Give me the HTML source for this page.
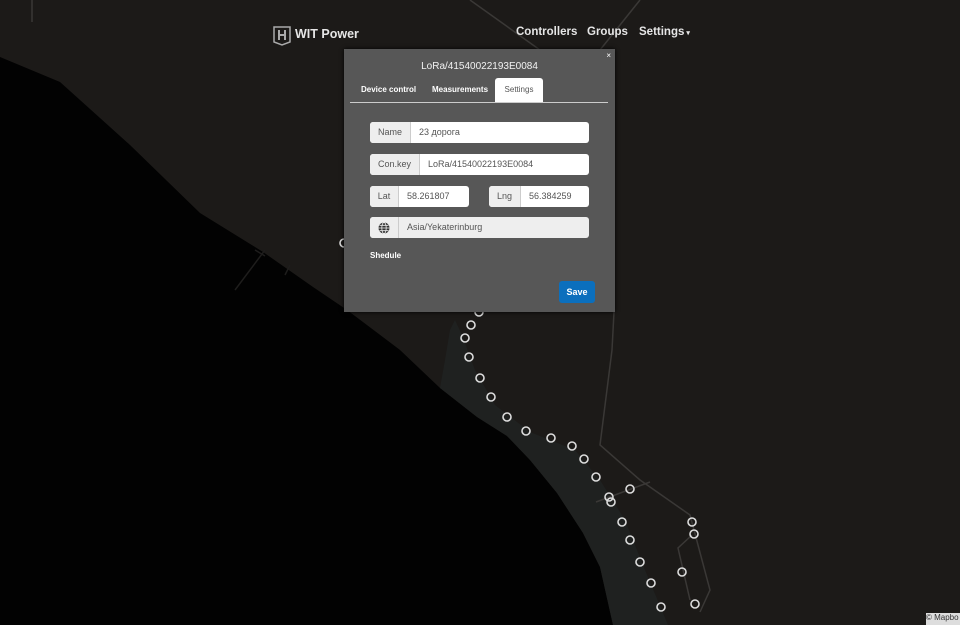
<!DOCTYPE html>
<html><head><meta charset="utf-8"><style>
body{margin:0;width:960px;height:625px;overflow:hidden;background:#1c1a18;font-family:"Liberation Sans",Arial,sans-serif;position:relative}
svg.map{position:absolute;left:0;top:0}
.nav{position:absolute;color:#e6e6e6;font-weight:bold;font-size:11.5px;top:26px}
.modal{position:absolute;left:344px;top:49px;width:271px;height:263px;background:#575757;box-shadow:0 0 4px #000}
.title{position:absolute;left:0;width:271px;top:12px;text-align:center;color:#f2f2f2;font-size:10px}
.tab{position:absolute;top:36px;font-size:8px;color:#fff;font-weight:bold}
.tabact{position:absolute;left:151px;top:29px;width:48px;height:24px;background:#fff;border-radius:3px 3px 0 0;color:#555;font-size:8px;text-align:center;line-height:24px}
.line{position:absolute;left:6px;top:53px;width:258px;height:1px;background:#ccc}
.grp{position:absolute;height:21px;border-radius:3px;background:#fff;font-size:9px;color:#555;overflow:hidden}
.grp .ad{position:absolute;left:0;top:0;height:21px;background:#eee;border-right:1px solid #ccc;text-align:center;line-height:21px;color:#555}
.grp .v{position:absolute;top:0;line-height:21px}
.save{position:absolute;left:215px;top:232px;width:36px;height:22px;background:#0b6fbd;border-radius:3px;color:#fff;font-size:9px;text-align:center;line-height:22px;font-weight:bold}
</style></head><body>
<svg class="map" width="960" height="625">
<polygon points="0,57 60,82 130,145 200,213 263,252 313,287 347,310 400,350 440,388 477,417 507,436 530,460 557,493 583,533 600,567 613,625 0,625" fill="#020202"/>
<polygon points="440,388 477,417 507,436 530,460 557,493 583,533 600,567 613,625 668,625 645,570 625,520 600,480 575,450 530,432 495,405 475,370 462,335 455,320 450,330 445,360" fill="#1f2120"/>
<g stroke="#1e1d1c" stroke-width="1.5" fill="none">
<path d="M235,290 L265,250 M255,250 L265,256 M285,275 L290,265"/>
</g>
<g stroke="#3a3836" stroke-width="1.5" fill="none">
<line x1="32" y1="0" x2="32" y2="22"/><line x1="470" y1="0" x2="540" y2="50"/><line x1="640" y1="0" x2="600" y2="50"/>
<path d="M614,312 L612,350 L600,445 L640,480 L690,515 L710,590 L700,612"/>
<path d="M596,502 L650,482"/><path d="M692,535 L678,548 L690,600"/>
</g>
<g stroke="#ddd" stroke-width="1.6" fill="none">
<circle cx="344" cy="243" r="4"/><circle cx="479" cy="312" r="4"/><circle cx="471" cy="325" r="4"/><circle cx="465" cy="338" r="4"/><circle cx="469" cy="357" r="4"/><circle cx="480" cy="378" r="4"/><circle cx="491" cy="397" r="4"/><circle cx="507" cy="417" r="4"/><circle cx="526" cy="431" r="4"/><circle cx="551" cy="438" r="4"/><circle cx="572" cy="446" r="4"/><circle cx="584" cy="459" r="4"/><circle cx="596" cy="477" r="4"/><circle cx="609" cy="497" r="4"/><circle cx="611" cy="502" r="4"/><circle cx="630" cy="489" r="4"/><circle cx="622" cy="522" r="4"/><circle cx="630" cy="540" r="4"/><circle cx="640" cy="562" r="4"/><circle cx="651" cy="583" r="4"/><circle cx="661" cy="607" r="4"/><circle cx="692" cy="522" r="4"/><circle cx="694" cy="534" r="4"/><circle cx="682" cy="572" r="4"/><circle cx="695" cy="604" r="4"/>
</g>
<path d="M274,27 h16 v15 l-8,3 l-8,-3z" fill="none" stroke="#aaa" stroke-width="1.5"/><path d="M279,30 v10 M285,30 v10 M279,35 h6" stroke="#aaa" stroke-width="2"/>
</svg>
<div class="nav" style="left:295px;top:27px;font-size:12.5px">WIT Power</div>
<div class="nav" style="left:516px">Controllers</div>
<div class="nav" style="left:587px">Groups</div>
<div class="nav" style="left:639px">Settings<span style="font-size:7px"> ▾</span></div>
<div style="position:absolute;right:0;bottom:0;width:34px;height:12px;background:#ddd;font-size:8px;color:#333">© Mapbo</div>
<div class="modal">
<div style="position:absolute;right:4px;top:2px;color:#fff;font-size:8px">×</div>
<div class="title">LoRa/41540022193E0084</div>
<div class="tab" style="left:17px">Device control</div>
<div class="tab" style="left:88px">Measurements</div>
<div class="tabact">Settings</div>
<div class="line"></div>
<div class="grp" style="left:26px;top:73px;width:219px"><div class="ad" style="width:40px">Name</div><div class="v" style="left:49px">23 дорога</div></div>
<div class="grp" style="left:26px;top:105px;width:219px"><div class="ad" style="width:49px">Con.key</div><div class="v" style="left:58px">LoRa/41540022193E0084</div></div>
<div class="grp" style="left:26px;top:137px;width:99px"><div class="ad" style="width:28px">Lat</div><div class="v" style="left:37px">58.261807</div></div>
<div class="grp" style="left:145px;top:137px;width:100px"><div class="ad" style="width:31px">Lng</div><div class="v" style="left:40px">56.384259</div></div>
<div class="grp" style="left:26px;top:168px;width:219px;background:#eee"><div class="ad" style="width:28px"><svg width="12" height="12" viewBox="0 0 12 12" style="margin-top:5px"><circle cx="6" cy="6" r="5.5" fill="#333"/><g stroke="#eee" stroke-width="0.8" fill="none"><ellipse cx="6" cy="6" rx="2.2" ry="5.5"/><line x1="0.5" y1="6" x2="11.5" y2="6"/><line x1="1.5" y1="3.3" x2="10.5" y2="3.3"/><line x1="1.5" y1="8.7" x2="10.5" y2="8.7"/></g></svg></div><div class="v" style="left:37px">Asia/Yekaterinburg</div></div>
<div style="position:absolute;left:26px;top:202px;color:#fff;font-size:8px;font-weight:bold">Shedule</div>
<div class="save">Save</div>
</div>
</body></html>
